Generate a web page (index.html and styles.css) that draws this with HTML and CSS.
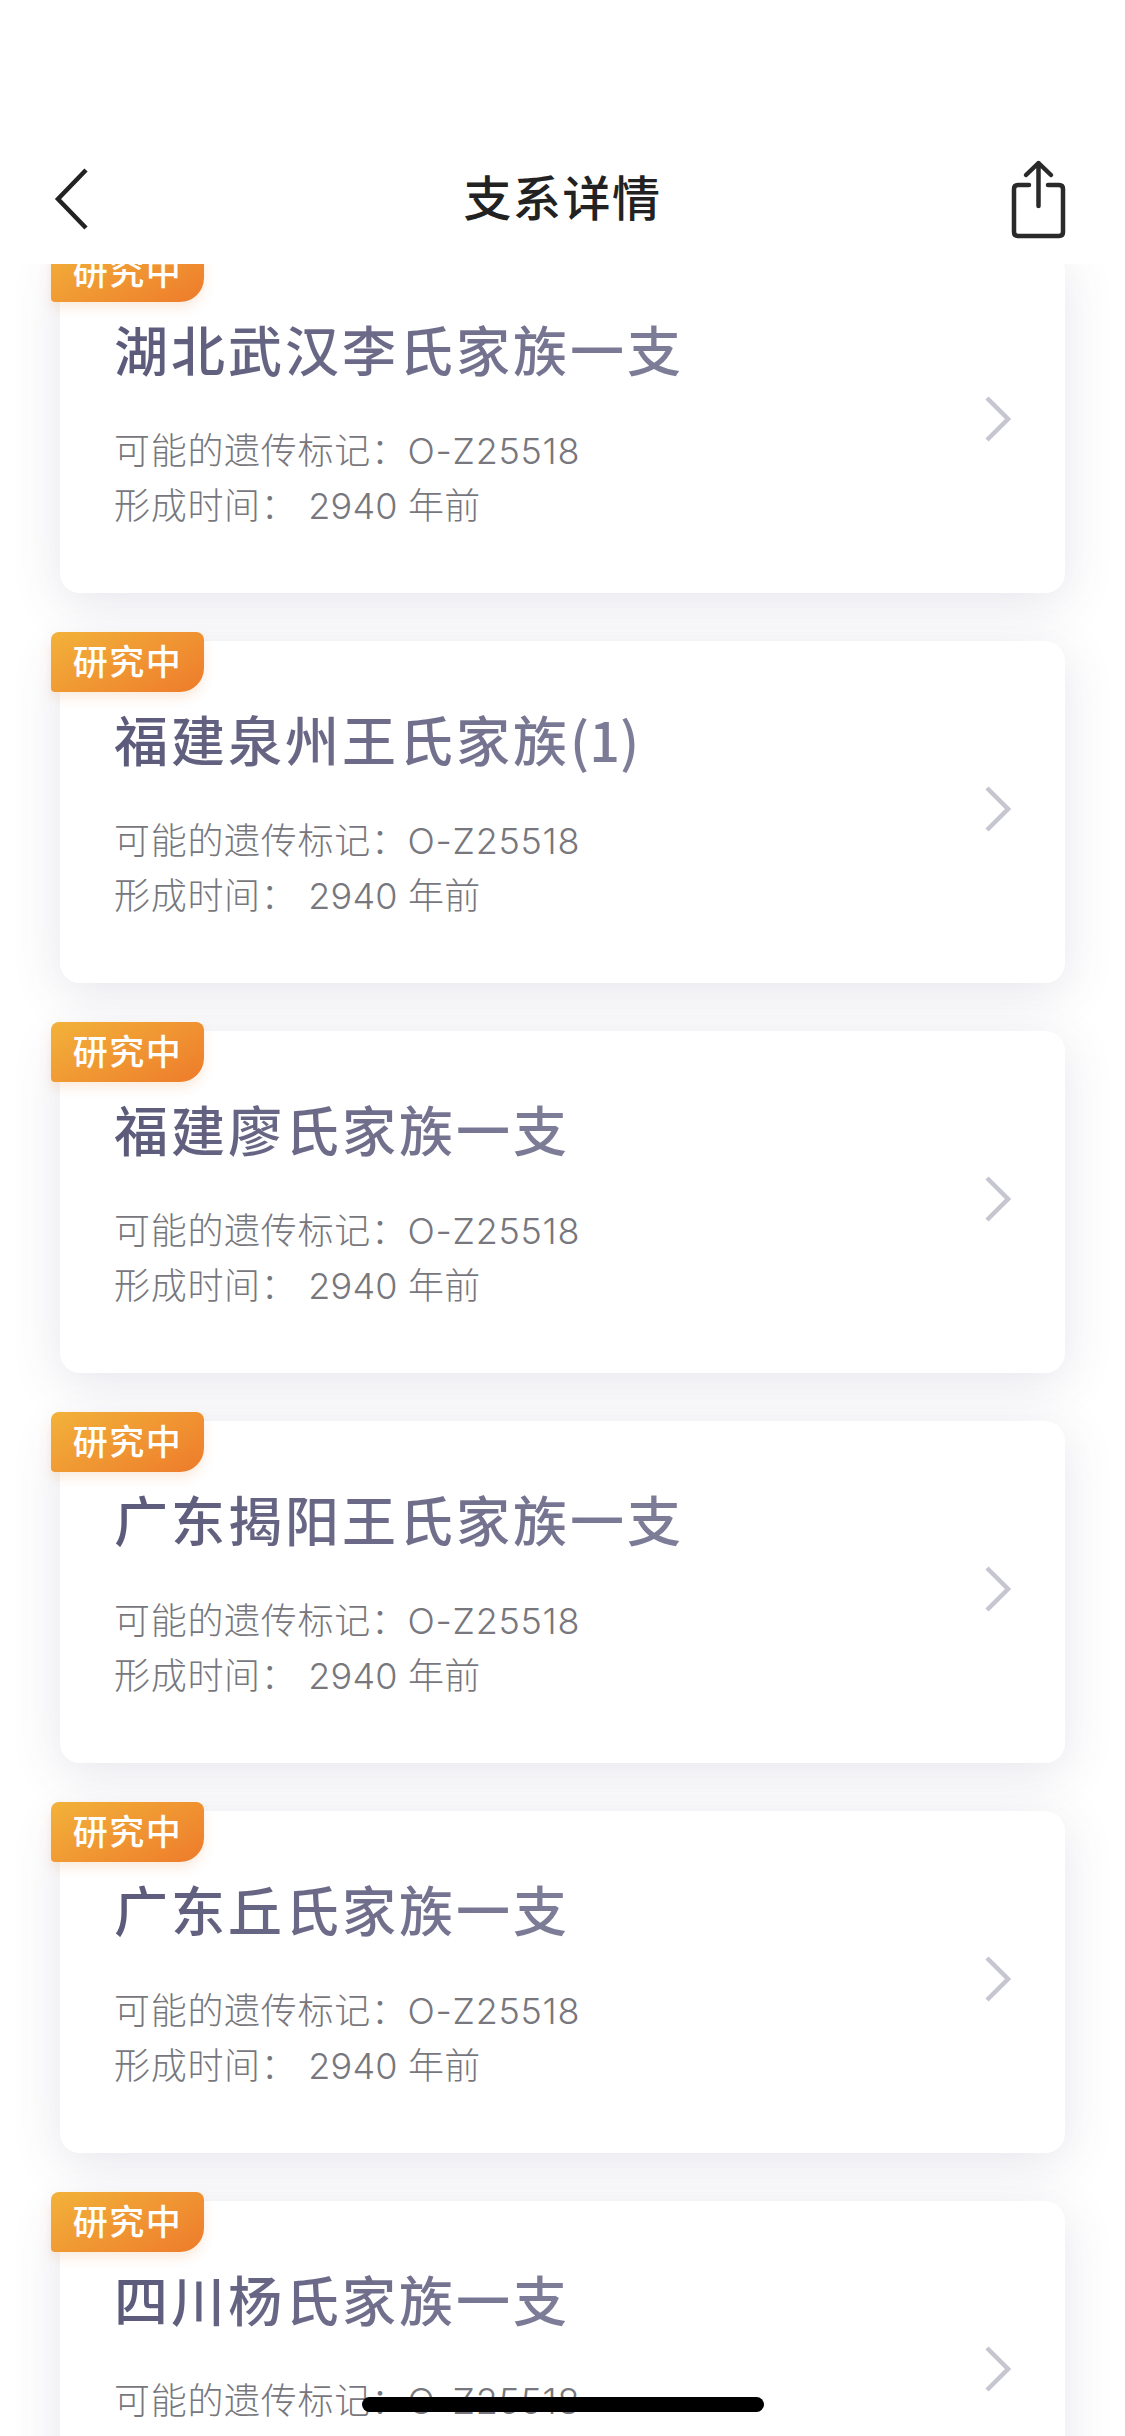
FILE: index.html
```html
<!DOCTYPE html>
<html lang="zh-CN">
<head>
    <meta charset="UTF-8">
    <meta name="viewport" content="width=device-width, initial-scale=1.0">
    <title>支系详情</title>
    <link rel="stylesheet" href="styles.css">
</head>
<body>
    <div class="header">
        <svg class="icon-back" width="36" height="64" viewBox="0 0 36 64" fill="none">
            <path d="M33 3L5 32L33 61" stroke="#222" stroke-width="4.5"/>
        </svg>
        <h1 class="header-title">支系详情</h1>
        <svg class="icon-share" width="57" height="81" viewBox="0 0 57 81" fill="none" stroke="#2a2a2a" stroke-width="4.5" stroke-linecap="round" stroke-linejoin="round">
            <path d="M19 26H8Q4 26 4 30V73Q4 77 8 77H49Q53 77 53 73V30Q53 26 49 26H38"/>
            <path d="M28.500 47V4M16 16L28.500 4L41 16"/>
        </svg>
    </div>
    <div class="list">
        <div class="card">
            <span class="badge">研究中</span>
            <div class="card-body">
                <h2 class="card-title">湖北武汉李氏家族一支</h2>
                <p class="card-line">可能的遗传标记：O-Z25518</p>
                <p class="card-line">形成时间： <span class="years">2940 年前</span></p>
            </div>
            <svg class="icon-more" width="26" height="46" viewBox="0 0 26 46" fill="none"><path d="M2 2L23 23L2 44" stroke="#c6c6d0" stroke-width="4.500"/></svg>
        </div>
        <div class="card">
            <span class="badge">研究中</span>
            <div class="card-body">
                <h2 class="card-title">福建泉州王氏家族<span class="title-num">(1)</span></h2>
                <p class="card-line">可能的遗传标记：O-Z25518</p>
                <p class="card-line">形成时间： <span class="years">2940 年前</span></p>
            </div>
            <svg class="icon-more" width="26" height="46" viewBox="0 0 26 46" fill="none"><path d="M2 2L23 23L2 44" stroke="#c6c6d0" stroke-width="4.500"/></svg>
        </div>
        <div class="card">
            <span class="badge">研究中</span>
            <div class="card-body">
                <h2 class="card-title">福建廖氏家族一支</h2>
                <p class="card-line">可能的遗传标记：O-Z25518</p>
                <p class="card-line">形成时间： <span class="years">2940 年前</span></p>
            </div>
            <svg class="icon-more" width="26" height="46" viewBox="0 0 26 46" fill="none"><path d="M2 2L23 23L2 44" stroke="#c6c6d0" stroke-width="4.500"/></svg>
        </div>
        <div class="card">
            <span class="badge">研究中</span>
            <div class="card-body">
                <h2 class="card-title">广东揭阳王氏家族一支</h2>
                <p class="card-line">可能的遗传标记：O-Z25518</p>
                <p class="card-line">形成时间： <span class="years">2940 年前</span></p>
            </div>
            <svg class="icon-more" width="26" height="46" viewBox="0 0 26 46" fill="none"><path d="M2 2L23 23L2 44" stroke="#c6c6d0" stroke-width="4.500"/></svg>
        </div>
        <div class="card">
            <span class="badge">研究中</span>
            <div class="card-body">
                <h2 class="card-title">广东丘氏家族一支</h2>
                <p class="card-line">可能的遗传标记：O-Z25518</p>
                <p class="card-line">形成时间： <span class="years">2940 年前</span></p>
            </div>
            <svg class="icon-more" width="26" height="46" viewBox="0 0 26 46" fill="none"><path d="M2 2L23 23L2 44" stroke="#c6c6d0" stroke-width="4.500"/></svg>
        </div>
        <div class="card">
            <span class="badge">研究中</span>
            <div class="card-body">
                <h2 class="card-title">四川杨氏家族一支</h2>
                <p class="card-line">可能的遗传标记：O-Z25518</p>
            </div>
            <svg class="icon-more" width="26" height="46" viewBox="0 0 26 46" fill="none"><path d="M2 2L23 23L2 44" stroke="#c6c6d0" stroke-width="4.500"/></svg>
        </div>
    </div>
    <div class="home-bar"></div>
</body>
</html>
```

FILE: styles.css
```css
html, body {
    margin: 0;
    padding: 0;
}
body {
    width: 1125px;
    height: 2436px;
    overflow: hidden;
    position: relative;
    background-color: #fff;
    font-family: Inter, "Noto Sans CJK SC", sans-serif;
}
.header {
    position: relative;
    z-index: 2;
    height: 132px;
    padding: 132px 58px 0 53px;
    display: flex;
    justify-content: space-between;
    align-items: flex-start;
    background-color: #fff;
}
.icon-back {
    margin-top: 35px;
}
.icon-share {
    margin-top: 27px;
}
.header-title {
    margin: 31px 0 0 0;
    font-family: "Noto Sans CJK SC", sans-serif;
    font-size: 48px;
    line-height: 64px;
    font-weight: 500;
    letter-spacing: 1.500px;
    color: #222;
    position: absolute;
    left: 0;
    right: 0;
    text-align: center;
}
.list {
    margin-top: -13px;
    padding: 0 60px;
    display: flex;
    flex-direction: column;
    gap: 48px;
}
.card {
    position: relative;
    flex: none;
    height: 342px;
    padding: 0 54px 7px 55px;
    box-sizing: border-box;
    display: flex;
    justify-content: space-between;
    align-items: center;
    background-color: #fff;
    border-radius: 20px;
    box-shadow: 0 10px 50px rgba(80, 80, 120, 0.14);
}
.card-body {
    align-self: flex-start;
    padding-top: 63px;
}
.badge {
    position: absolute;
    left: -9px;
    top: -9px;
    width: 153px;
    height: 60px;
    line-height: 56px;
    text-align: center;
    font-family: "Noto Sans CJK SC", sans-serif;
    font-size: 35px;
    font-weight: 500;
    letter-spacing: 1.500px;
    color: #fff;
    background: linear-gradient(150deg, #f2b23a, #ee7b2b);
    border-radius: 8px 8px 24px 4px;
    box-shadow: 0 6px 12px rgba(230, 130, 50, 0.16);
}
.card-title {
    margin: 0 0 40px -1px;
    font-family: "Noto Sans CJK SC", sans-serif;
    font-size: 54px;
    line-height: 70px;
    font-weight: 500;
    letter-spacing: 3px;
    width: fit-content;
    color: #65637f;
    background: linear-gradient(90deg, #5c5a7a, #7f7e99);
    -webkit-background-clip: text;
    background-clip: text;
    -webkit-text-fill-color: transparent;
}
.title-num {
    letter-spacing: 0;
}
.card-line {
    margin: 0 0 0 -1px;
    font-size: 36px;
    line-height: 55px;
    font-weight: 300;
    letter-spacing: 0.700px;
    color: #77777d;
}
.years {
    letter-spacing: 0.200px;
}
.home-bar {
    position: absolute;
    left: 362px;
    top: 2397px;
    width: 402px;
    height: 15px;
    border-radius: 8px;
    background-color: #000;
}
```
